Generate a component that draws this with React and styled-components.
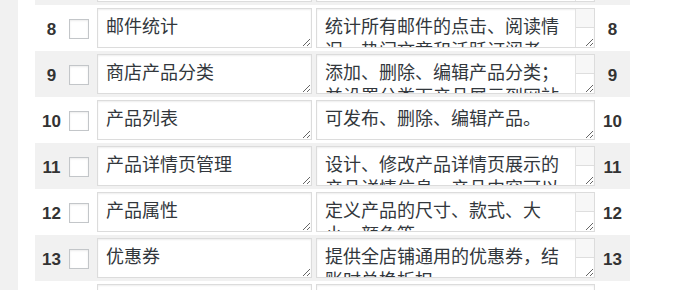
import React from "react";
import styled, { createGlobalStyle } from "styled-components";

// rows 7 and 14 are only partly in view (the list is scrolled)
const rows = [
  { id: 7, title: "订阅者管理", desc: "管理所有订阅者的订阅状态", scroll: true, edge: true },
  { id: 8, title: "邮件统计", desc: "统计所有邮件的点击、阅读情况、热门文章和活跃订阅者。", scroll: true },
  { id: 9, title: "商店产品分类", desc: "添加、删除、编辑产品分类；并设置分类下产品展示到网站的位置。", scroll: true },
  { id: 10, title: "产品列表", desc: "可发布、删除、编辑产品。" },
  { id: 11, title: "产品详情页管理", desc: "设计、修改产品详情页展示的产品详情信息、产品内容可以自定义。", scroll: true },
  { id: 12, title: "产品属性", desc: "定义产品的尺寸、款式、大小、颜色等。", scroll: true },
  { id: 13, title: "优惠券", desc: "提供全店铺通用的优惠券，结账时兑换折扣。", scroll: true },
  { id: 14, title: "订单管理", desc: "查看、处理和导出所有订单。", edge: true },
];

const GlobalStyle = createGlobalStyle`
  html, body {
    margin: 0;
    padding: 0;
    background: #fff;
    font-family: "Liberation Sans", "Noto Sans CJK SC", sans-serif;
  }
`;

const Page = styled.div`
  display: flex;
  height: 290px;
  overflow: hidden;
`;

const SideStrip = styled.div`
  width: 18px;
  flex-shrink: 0;
  background: #f1f1f1;
`;

const Main = styled.div`
  flex: 1;
  background: #fff;
  padding-left: 17px;
  overflow: hidden;
`;

const List = styled.div`
  width: 595px;
  margin-top: -41px;
`;

const Row = styled.div`
  display: grid;
  grid-template-columns: 32px 30px 215px 283px 35px;
  align-items: center;
  height: 46px;
  background: ${(p) => (p.striped ? "#f1f1f1" : "transparent")};
`;

const Num = styled.div`
  text-align: center;
  font-family: "Liberation Sans", Arial, sans-serif;
  font-weight: 700;
  font-size: 17px;
  color: #333;
  padding-top: 3px;
  margin-left: ${(p) => (p.right ? "0" : "1px")};
`;

const Check = styled.span`
  display: block;
  width: 20px;
  height: 20px;
  box-sizing: border-box;
  margin-left: 2px;
  margin-top: 1px;
  background: #fff;
  border: 1px solid #c3c6c9;
  box-shadow: inset 0 1px 2px rgba(0, 0, 0, 0.08);
`;

const Field = styled.textarea`
  display: block;
  box-sizing: border-box;
  height: 40px;
  width: 100%;
  padding: 4px ${(p) => (p.scroll ? 27 : 8)}px 4px 8px;
  border: 1px solid #dcdcdc;
  border-radius: 0;
  box-shadow: inset 0 1px 2px rgba(0, 0, 0, 0.07);
  background: #fff;
  color: #32373c;
  font-family: "Noto Sans CJK SC", "Liberation Sans", sans-serif;
  font-size: 18px;
  line-height: 24px;
  overflow: hidden;
  resize: vertical;
  outline: none;
`;

const FieldBox = styled.div`
  position: relative;
  width: ${(p) => p.w}px;
  margin-left: ${(p) => p.ml || 0}px;
`;

// drawn scrollbar: the headless browser hides native ones
const ScrollTrack = styled.div`
  position: absolute;
  top: 1px;
  right: 1px;
  bottom: 1px;
  width: 18px;
  border-left: 1px solid #e2e2e2;
  pointer-events: none;
`;

const ScrollThumb = styled.div`
  height: 50%;
  box-sizing: border-box;
  background: #f7f7f7;
  border-bottom: 1px solid #dedede;
`;

const App = () => {
  return (
    <>
      <GlobalStyle />
      <Page>
        <SideStrip />
        <Main>
          <List>
            {rows.map((r) => (
              <Row key={r.id} striped={r.id % 2 === 1}>
                <Num>{r.edge ? "" : r.id}</Num>
                <Check />
                <FieldBox w={215}>
                  <Field defaultValue={r.title} />
                </FieldBox>
                <FieldBox w={279} ml={4}>
                  <Field scroll={r.scroll} defaultValue={r.desc} />
                  {r.scroll && (
                    <ScrollTrack>
                      <ScrollThumb />
                    </ScrollTrack>
                  )}
                </FieldBox>
                <Num right>{r.edge ? "" : r.id}</Num>
              </Row>
            ))}
          </List>
        </Main>
      </Page>
    </>
  );
};

export default App;
